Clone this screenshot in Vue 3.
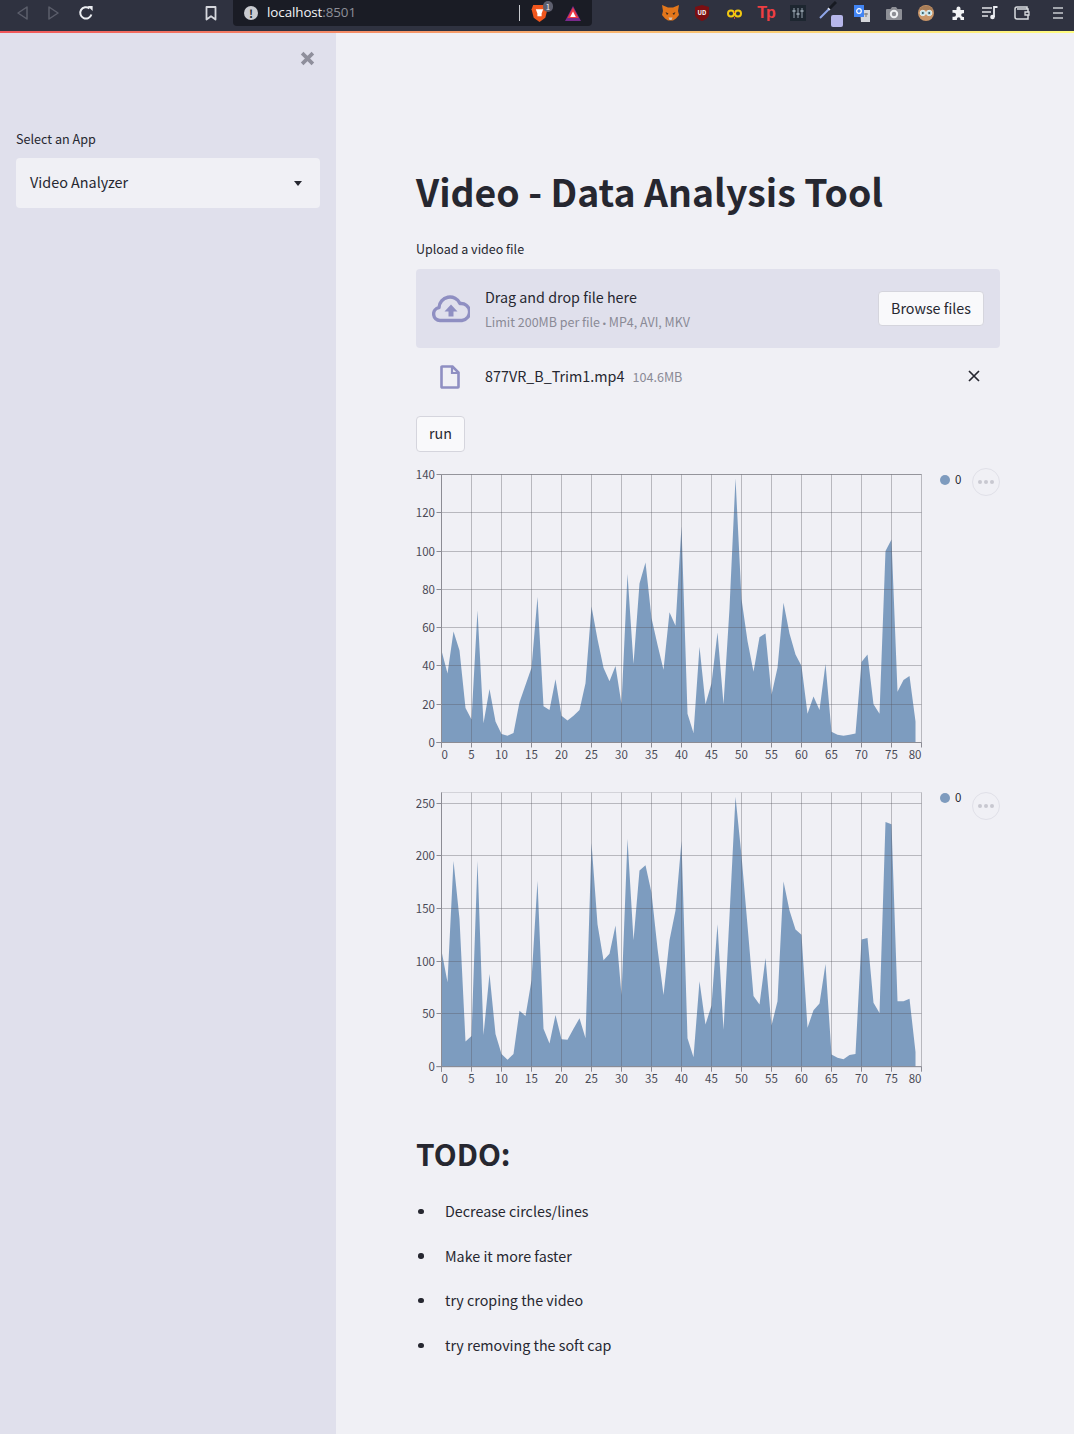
<template>
  <div class="page">
    <header class="browser">
      <div class="nav">
        <span class="slot">
          <svg width="14" height="16" viewBox="0 0 14 16"><path d="M12 2 3 8l9 6z" fill="none" stroke="#5c5f6b" stroke-width="1.5" stroke-linejoin="round" /></svg>
        </span>
        <span class="slot">
          <svg width="14" height="16" viewBox="0 0 14 16"><path d="M2 2l9 6-9 6z" fill="none" stroke="#5c5f6b" stroke-width="1.5" stroke-linejoin="round" /></svg>
        </span>
        <span class="slot">
          <svg width="16" height="16" viewBox="0 0 16 16"><path d="M13.4 9.5A5.7 5.7 0 1 1 11.5 3.4" fill="none" stroke="#eceef2" stroke-width="2" /><path d="M9.6 1h5v5z" fill="#eceef2" /></svg>
        </span>
      </div>
      <span class="slot bookmark">
        <svg width="12" height="15" viewBox="0 0 12 15"><path d="M1.5 1h9v12.5L6 10.2l-4.500 3.300z" fill="none" stroke="#d6d8de" stroke-width="1.800" stroke-linejoin="round" /></svg>
      </span>
      <div class="address">
        <span class="info">!</span>
        <span class="host">localhost<em>:8501</em></span>
        <span class="divider"></span>
        <span class="brave">
          <svg width="17" height="19" viewBox="0 0 16 18"><path d="M2 1h12l1.500 4-2 8L8 17l-5.500-4-2-8z" fill="#f0561d" /><path d="M4.500 5h7L10 9v2.500H6V9z" fill="#fff" /></svg>
          <b>1</b>
        </span>
        <svg class="triangle" width="16" height="15" viewBox="0 0 16 15"><path d="M8 0l8 15H0z" fill="#7a2a8c" /><path d="M8 1.500 13.500 12h-11z" fill="#ee3a43" /><path d="M8 5.500 10.800 11H5.200z" fill="#fff" /></svg>
      </div>
      <div class="extensions">
        <span class="slot">
          <svg width="17" height="16" viewBox="0 0 17 16"><path d="M0 0l6 2.500h5L17 0l-1 6 1 4-3 3.500-3 2H6l-3-2-3-3.500 1-4z" fill="#e2761b" /><path d="M3.500 7l3 1.500-1.500 1.500zM13.500 7l-3 1.500 1.500 1.500z" fill="#3b2a1e" /><path d="M6.500 12.500h4L9.500 15h-2z" fill="#d7c1b3" /></svg>
        </span>
        <span class="slot">
          <svg width="14" height="16" viewBox="0 0 14 16"><path d="M7 0l7 2v7c0 3-3 5.500-7 7-4-1.500-7-4-7-7V2z" fill="#7a0f12" /><text x="7" y="10" class="tiny">UD</text></svg>
        </span>
        <span class="slot">
          <svg width="15" height="13" viewBox="0 0 15 13"><circle cx="4" cy="6.500" r="3" fill="none" stroke="#f2c811" stroke-width="2" /><circle cx="11" cy="6.500" r="3" fill="none" stroke="#f2c811" stroke-width="2" /><path d="M7.500 4v2M7.500 10v2" stroke="#d8452e" stroke-width="1" /></svg>
        </span>
        <span class="slot"><span class="tp">Tp</span></span>
        <span class="slot">
          <svg width="16" height="16" viewBox="0 0 16 16"><rect width="16" height="16" fill="#1d2630" /><path d="M4 3v10M8 3v10M12 3v10" stroke="#6d7a84" stroke-width="1.500" /><path d="M2.500 6h3M6.500 9h3M10.500 6h3" stroke="#8b98a2" stroke-width="2" /></svg>
        </span>
        <span class="slot pen">
          <svg class="pen-mark" width="18" height="18" viewBox="0 0 18 18"><path d="M1 17 10 8" stroke="#8fa6e8" stroke-width="2" /><path d="M10 8l7-7" stroke="#171a22" stroke-width="3" /><path d="M9 7l2 2" stroke="#dfe3ee" stroke-width="1.500" /></svg>
          <i class="pen-badge"></i>
        </span>
        <span class="slot">
          <svg width="16" height="17" viewBox="0 0 16 17"><path d="M6 5h10v12H7z" fill="#d4d6da" /><rect width="10" height="12" fill="#4285f4" /><circle cx="5" cy="6" r="2.300" fill="none" stroke="#fff" stroke-width="1.200" /><path d="M10 9h4M12 8v4" stroke="#777" /></svg>
        </span>
        <span class="slot">
          <svg width="16" height="14" viewBox="0 0 16 14"><path d="M1 3h3.500L6 1h4l1.500 2H15a1 1 0 0 1 1 1v9a1 1 0 0 1-1 1H1a1 1 0 0 1-1-1V4a1 1 0 0 1 1-1z" fill="#8d8f96" /><circle cx="8" cy="8" r="3.200" fill="none" stroke="#eef0f3" stroke-width="2" /></svg>
        </span>
        <span class="slot">
          <svg width="16" height="16" viewBox="0 0 16 16"><circle cx="8" cy="8" r="8" fill="#c99668" /><path d="M1 5a8 8 0 0 1 14 0z" fill="#a97e58" /><circle cx="4.800" cy="8" r="2.700" fill="#b7e0e6" stroke="#e8eef0" /><circle cx="11.200" cy="8" r="2.700" fill="#b7e0e6" stroke="#e8eef0" /><circle cx="4.800" cy="8" r="1" fill="#34505a" /><circle cx="11.200" cy="8" r="1" fill="#34505a" /></svg>
        </span>
        <span class="slot">
          <svg width="15" height="15" viewBox="0 0 15 15"><path d="M5.500 2.500a2 2 0 0 1 4 0V4H13v3.300h-1a1.800 1.800 0 0 0 0 3.600h1V14H9.500v-1a1.800 1.800 0 0 0-3.600 0v1H1.500v-3.300H3a2 2 0 0 0 0-4H1.500V4h4z" fill="#f2f3f5" /></svg>
        </span>
        <span class="slot">
          <svg width="16" height="14" viewBox="0 0 16 14"><path d="M0 2h10M0 6h9M0 10h6" stroke="#e2e4e8" stroke-width="1.500" /><path d="M12 11V1h3.500" fill="none" stroke="#eceef2" stroke-width="1.800" /><circle cx="10.500" cy="11" r="2.300" fill="#eceef2" /></svg>
        </span>
        <span class="slot">
          <svg width="16" height="14" viewBox="0 0 16 14"><path d="M13 3V1H3a2 2 0 0 0-2 2v8a2 2 0 0 0 2 2h11V3H3" fill="none" stroke="#d8dade" stroke-width="1.500" /><path d="M15 6h-4v3h4z" fill="#2f3240" stroke="#d8dade" stroke-width="1.300" /></svg>
        </span>
        <span class="slot menu">
          <svg width="10" height="12" viewBox="0 0 10 12"><path d="M0 1h10M0 6h10M0 11h10" stroke="#c9cbd0" stroke-width="1.600" /></svg>
        </span>
      </div>
    </header>
    <div class="stripe"></div>

    <div class="app">
      <aside class="sidebar">
        <div class="close-row">
          <svg width="15" height="15" viewBox="0 0 14 14"><path d="M2 2l10 10M12 2 2 12" stroke="#8f8f9c" stroke-width="3.400" /></svg>
        </div>
        <label class="select-label">Select an App</label>
        <div class="select">
          <span class="select-value">Video Analyzer</span>
          <svg width="8" height="5" viewBox="0 0 8 5"><path d="M0 0h8L4 5z" fill="#262730" /></svg>
        </div>
      </aside>

      <main class="main">
        <h1>Video - Data Analysis Tool</h1>
        <div class="upload-label">Upload a video file</div>
        <section class="dropzone">
          <svg class="cloud" width="38" height="28" viewBox="0 0 38 28">
            <path d="M10 25.500H8a6.500 6.500 0 0 1-1-12.900A11 11 0 0 1 28 8.500a8.500 8.500 0 0 1 2 17z" fill="none" stroke="#8f8fc2" stroke-width="3.400" stroke-linejoin="round" />
            <path d="M19 9.500l6.500 7H21.500v5h-5v-5h-4z" fill="#8f8fc2" />
          </svg>
          <div class="drop-text">
            <div class="drop-title">Drag and drop file here</div>
            <div class="drop-hint">Limit 200MB per file <span class="dot">•</span> MP4, AVI, MKV</div>
          </div>
          <button class="btn browse">Browse files</button>
        </section>
        <div class="file-row">
          <svg class="file-icon" width="20" height="24" viewBox="0 0 20 24">
            <path d="M2 1.500h10.500L18.500 7.500V22a.5.500 0 0 1-.5.500H2a.5.500 0 0 1-.5-.5V2a.5.500 0 0 1 .5-.500z" fill="none" stroke="#8f8fc2" stroke-width="2.600" />
            <path d="M12 2v6h6" fill="none" stroke="#8f8fc2" stroke-width="2.200" />
          </svg>
          <span class="file-name">877VR_B_Trim1.mp4</span>
          <span class="file-size">104.6MB</span>
          <svg class="file-x" width="12" height="12" viewBox="0 0 12 12"><path d="M1 1l10 10M11 1 1 11" stroke="#262730" stroke-width="1.700" /></svg>
        </div>
        <button class="btn run">run</button>

        <div v-for="chart in charts" :key="chart.id" class="chart" :style="{ height: chart.height + 'px' }">
          <svg :width="584" :height="chart.height" :viewBox="`0 0 584 ${chart.height}`">
            <path :d="areaPath(chart)" fill="#4c78a8" fill-opacity="0.7" />
            <g stroke="#55555f" stroke-opacity="0.36">
              <line v-for="t in chart.yTicks" :key="'gy' + t" x1="25.500" x2="505.500" :y1="yPos(chart, t)" :y2="yPos(chart, t)" />
              <line v-for="t in xTicks" :key="'gx' + t" :x1="xPos(t)" :x2="xPos(t)" :y1="chart.top" :y2="chart.top + chart.plot" />
              <line x1="25.500" x2="505.500" :y1="chart.top" :y2="chart.top" :stroke-opacity="chart.id === 2 ? 0.18 : 0.36" />
            </g>
            <g stroke="#8c8c94">
              <line x1="25.500" x2="25.500" :y1="chart.top" :y2="chart.top + chart.plot + 5" />
              <line x1="20.500" x2="505.500" :y1="chart.top + chart.plot" :y2="chart.top + chart.plot" />
              <line v-for="t in chart.yTicks" :key="'ty' + t" x1="20.500" x2="25.500" :y1="yPos(chart, t)" :y2="yPos(chart, t)" />
              <line v-for="t in xTicks" :key="'tx' + t" :x1="xPos(t)" :x2="xPos(t)" :y1="chart.top + chart.plot" :y2="chart.top + chart.plot + 5" />
            </g>
            <text v-for="t in chart.yTicks" :key="'ly' + t" class="tick" x="19" :y="yPos(chart, t) + 4.500" text-anchor="end">{{ t }}</text>
            <text
              v-for="t in xTicks"
              :key="'lx' + t"
              class="tick"
              :x="xPos(t)"
              :y="chart.top + chart.plot + 16"
              :text-anchor="t === 0 ? 'start' : t === 80 ? 'end' : 'middle'"
            >{{ t }}</text>
            <circle cx="529" :cy="chart.legendY" r="5" fill="#7e9bbe" />
            <text class="legend" x="539" :y="chart.legendY + 4">0</text>
          </svg>
          <button class="more" :style="{ top: chart.moreTop + 'px' }"><i></i><i></i><i></i></button>
        </div>

        <h2>TODO:</h2>
        <ul>
          <li v-for="item in todos" :key="item">{{ item }}</li>
        </ul>
      </main>
    </div>
  </div>
</template>

<script setup>
const first = [48, 36, 58, 48, 18, 12, 69, 10, 28, 11, 4.5, 3.5, 5, 21, 30, 39, 76, 19, 17, 33, 14, 11.5, 14, 17, 31, 71, 54, 39, 32, 40, 20, 88, 41, 83, 94, 65, 51, 38, 68, 61, 113, 15, 5, 50, 20, 31, 57.5, 20, 70, 138, 75, 53, 37, 55, 57, 25, 39, 73, 57, 46, 40, 15, 24, 17, 41, 5.6, 4, 3.5, 4, 4.7, 42, 46, 20, 15, 100, 106, 26.5, 32.6, 34.7, 11]
const second = [110, 80, 195, 140, 24, 29, 195, 30, 88, 31, 12, 6.5, 12, 53, 48, 82, 176, 36, 22, 49, 26, 25.5, 36, 46, 27, 212, 135, 101, 107, 134, 68, 216, 120, 186, 191, 165, 112, 68, 120, 148, 214, 27, 9, 81, 40, 58, 135, 35, 143, 256, 200, 134, 67, 59, 103, 39, 62, 175.5, 148, 130, 125, 37, 53.5, 60, 97.5, 11.6, 8.5, 7, 11, 12, 120.7, 122, 60.7, 51, 232, 230, 62, 62, 64.5, 14]

const charts = [
  { id: 1, values: first, max: 140, top: 9.5, plot: 268, height: 300, legendY: 15, moreTop: 3, yTicks: [0, 20, 40, 60, 80, 100, 120, 140] },
  { id: 2, values: second, max: 260, top: 7.5, plot: 274.2, height: 305, legendY: 13, moreTop: 7, yTicks: [0, 50, 100, 150, 200, 250] },
]
const xTicks = Array.from({ length: 17 }, (_, i) => i * 5)
const todos = ['Decrease circles/lines', 'Make it more faster', 'try croping the video', 'try removing the soft cap']

function xPos(v) {
  return 25.5 + v * 6
}

function yPos(chart, v) {
  return Math.round(chart.top + chart.plot - (v / chart.max) * chart.plot - 0.5) + 0.5
}

function areaPath(chart) {
  const base = chart.top + chart.plot
  const pts = chart.values.map((v, i) => `${xPos(i)},${base - (v / chart.max) * chart.plot}`)
  return `M${xPos(0)},${base}L${pts.join('L')}L${xPos(chart.values.length - 1)},${base}Z`
}
</script>

<style scoped>
.page {
  color: #262730;
  font-family: "Noto Sans CJK SC", "Noto Sans", sans-serif;
  min-height: 1434px;
  display: flex;
  flex-direction: column;
}

.browser {
  align-items: flex-start;
  background: #2f3240;
  display: flex;
  height: 31px;
  padding-left: 6px;
}

.nav,
.extensions {
  display: flex;
}

.slot {
  align-items: center;
  display: flex;
  height: 26px;
  justify-content: center;
  position: relative;
  width: 32px;
}

.bookmark {
  margin-left: 93px;
}

.address {
  align-items: center;
  background: #1a1c25;
  border-radius: 0 0 4px 4px;
  display: flex;
  height: 26px;
  margin-left: 7px;
  padding-left: 11px;
  width: 358px;
}

.info {
  background: #c9cbd0;
  border-radius: 50%;
  color: #1a1c25;
  font-size: 11px;
  font-weight: 700;
  height: 14px;
  line-height: 14px;
  text-align: center;
  width: 14px;
}

.host {
  color: #f2f3f5;
  font-family: "Open Sans", sans-serif;
  font-size: 13.400px;
  letter-spacing: -0.1px;
  margin: -2px 0 0 9px;
}

.host em {
  color: #8d8f98;
  font-style: normal;
}

.divider {
  background: #c9cbd0;
  height: 16px;
  margin-left: 163px;
  width: 1px;
}

.brave {
  display: flex;
  margin-left: 11px;
  position: relative;
}

.brave b {
  background: #5d5f6e;
  border-radius: 6px;
  color: #e6e7f2;
  font-size: 8px;
  font-weight: 400;
  height: 11px;
  left: 12px;
  line-height: 11px;
  position: absolute;
  text-align: center;
  top: -3px;
  width: 10px;
}

.triangle {
  margin-left: 17px;
}

.extensions {
  margin-left: 62px;
}

.tiny {
  fill: #fff;
  font-size: 6px;
  font-weight: 700;
  text-anchor: middle;
}

.tp {
  color: #ef3e42;
  font-family: "Liberation Sans", sans-serif;
  font-size: 16px;
  font-weight: 700;
  letter-spacing: -1px;
  line-height: 20px;
}

.pen-mark {
  margin: -6px 0 0 -5px;
}

.pen-badge {
  background: #b6b6ea;
  border-radius: 2px;
  bottom: -1px;
  height: 12px;
  position: absolute;
  right: 3px;
  width: 12px;
}

.menu {
  margin-left: 4px;
}

.stripe {
  background: linear-gradient(90deg, #f0565a, #fffd80);
  height: 2px;
}

.app {
  display: flex;
  flex: 1;
}

.sidebar {
  background: #e0e0ec;
  box-sizing: border-box;
  padding: 0 16px;
  width: 336px;
}

.close-row {
  display: flex;
  height: 97px;
  justify-content: flex-end;
  padding: 18px 5px 0 0;
  box-sizing: border-box;
}

.select-label {
  display: block;
  font-size: 12.600px;
  line-height: 18px;
  margin-bottom: 10px;
}

.select {
  align-items: center;
  background: #f0f0f5;
  border-radius: 4px;
  box-sizing: border-box;
  display: flex;
  font-size: 14.400px;
  height: 50px;
  justify-content: space-between;
  padding: 0 18px 0 14px;
}

.select-value {
  padding-bottom: 3px;
}

.main {
  background: #f0f0f5;
  box-sizing: border-box;
  flex: 1;
  padding: 133px 74px 0 80px;
}

h1 {
  font-size: 37.400px;
  font-weight: 700;
  line-height: 50px;
  margin: 0;
}

.upload-label {
  font-size: 12.500px;
  line-height: 20px;
  margin-top: 23px;
}

.dropzone {
  align-items: center;
  background: #e0e0ec;
  border-radius: 4px;
  box-sizing: border-box;
  display: flex;
  height: 79px;
  margin-top: 10px;
  padding: 0 16px;
}

.cloud {
  margin-right: 15px;
}

.drop-text {
  flex: 1;
  padding-top: 2px;
}

.drop-title {
  font-size: 14.300px;
  line-height: 24px;
}

.drop-hint {
  color: #8a8a96;
  font-size: 12.500px;
  line-height: 20px;
  margin-top: 3px;
}

.dot {
  font-family: "Liberation Sans", sans-serif;
  font-size: 9px;
}

.btn {
  background: #f9f9fb;
  border: 1px solid #d5d5dd;
  border-radius: 4px;
  color: #262730;
  font-family: inherit;
  font-size: 14.300px;
  line-height: 24px;
  padding: 0 0 2px;
}

.browse {
  height: 35px;
  width: 106px;
}

.file-row {
  align-items: center;
  display: flex;
  height: 57px;
  padding-left: 24px;
  position: relative;
}

.file-icon {
  margin-right: 25px;
}

.file-name {
  font-size: 14.350px;
  line-height: 24px;
  padding-bottom: 2px;
}

.file-size {
  color: #8a8a96;
  font-size: 12.600px;
  margin-left: 8px;
}

.file-x {
  margin-bottom: 2px;
  margin-left: auto;
  margin-right: 20px;
}

.run {
  display: block;
  height: 36px;
  margin-top: 11px;
  width: 49px;
}

.chart {
  margin-top: 13px;
  position: relative;
}

.chart + .chart {
  margin-top: 20px;
}

.chart svg {
  display: block;
}

.tick {
  fill: #4a4a55;
  font-size: 11.500px;
}

.legend {
  fill: #262730;
  font-size: 11.500px;
}

.more {
  align-items: center;
  background: transparent;
  border: 1px solid #e0e0e8;
  border-radius: 50%;
  display: flex;
  gap: 2px;
  height: 28px;
  justify-content: center;
  padding: 0;
  position: absolute;
  right: 0;
  width: 28px;
}

.more i {
  background: #c8c8d0;
  border-radius: 50%;
  height: 4px;
  width: 4px;
}

h2 {
  font-size: 29.800px;
  font-weight: 600;
  line-height: 40px;
  margin: 43px 0 0;
}

ul {
  font-size: 14.300px;
  line-height: 24px;
  list-style: none;
  margin: 26px 0 0;
  padding: 0 0 0 2px;
}

li {
  align-items: center;
  display: flex;
  gap: 21.500px;
  margin-bottom: 20.600px;
}

li::before {
  background: #262730;
  border-radius: 50%;
  content: "";
  height: 5.500px;
  margin-top: 1px;
  width: 5.500px;
}
</style>

<style>
body {
  background: #f0f0f5;
}
</style>
